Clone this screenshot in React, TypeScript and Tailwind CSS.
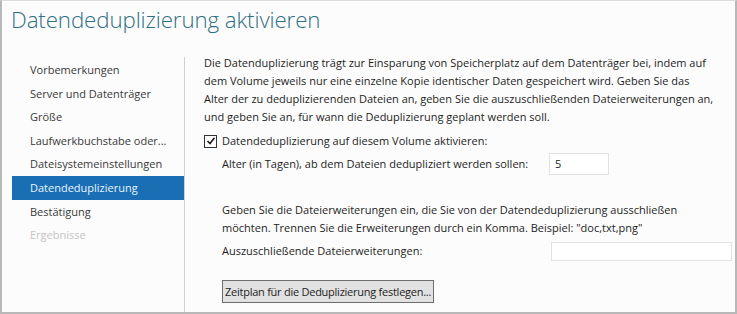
import React from "react";

const font = { fontFamily: '"Open Sans", "Noto Sans", sans-serif' };

export default function App() {
  const items = [
    "Vorbemerkungen",
    "Server und Datenträger",
    "Größe",
    "Laufwerkbuchstabe oder...",
    "Dateisystemeinstellungen",
    "Datendeduplizierung",
    "Bestätigung",
    "Ergebnisse",
  ];
  return (
    <div
      className="w-[737px] h-[314px] bg-[#fcfcfc] border-t border-t-[#dcdcdc] border-l-2 border-r-2 border-b-2 border-l-[#b8b8b8] border-r-[#b8b8b8] border-b-[#b8b8b8] flex flex-col overflow-hidden text-[11px] text-[#1e1e1e]"
      style={font}
    >
      <div className="h-[52px] pl-[9px] pt-[2px] text-[22.3px] font-light text-[#2f6f84] leading-[34px] tracking-[-0.1px]">
        Datendeduplizierung aktivieren
      </div>
      <div className="flex flex-1">
        <div className="w-[183px] pl-[10px] pt-[1px] border-r border-r-[#d0d0d0] mt-[4px] flex flex-col">
          {items.map((t, i) => (
            <div
              key={t}
              className={
                "h-[23.6px] leading-[23.6px] pl-[18px] whitespace-nowrap " +
                (i === 5
                  ? "bg-[#1a6eb4] text-[#e8f4ff]"
                  : i === 7
                  ? "text-[#c4c4c4]"
                  : "text-[#3a3a3a]")
              }
            >
              {t}
            </div>
          ))}
        </div>
        <div className="flex-1 pl-[19px] pt-[1px] flex flex-col">
          <p className="leading-[18px] whitespace-nowrap">
            Die Datenduplizierung trägt zur Einsparung von Speicherplatz auf dem Datenträger bei, indem auf
            <br />
            dem Volume jeweils nur eine einzelne Kopie identischer Daten gespeichert wird. Geben Sie das
            <br />
            Alter der zu deduplizierenden Dateien an, geben Sie die auszuschließenden Dateierweiterungen an,
            <br />
            und geben Sie an, für wann die Deduplizierung geplant werden soll.
          </p>
          <div className="flex items-center mt-[6px] h-[18px]">
            <div className="w-[13px] h-[13px] border border-[#333] bg-white flex items-center justify-center">
              <svg width="10" height="10" viewBox="0 0 10 10">
                <path d="M1.5 5 L4 7.5 L8.5 1.8" fill="none" stroke="#1a1a1a" strokeWidth="1.6" />
              </svg>
            </div>
            <span className="ml-[5px]">Datendeduplizierung auf diesem Volume aktivieren:</span>
          </div>
          <div className="flex items-center mt-[3px] pl-[18px] h-[22px]">
            <span className="w-[327px]">Alter (in Tagen), ab dem Dateien dedupliziert werden sollen:</span>
            <div className="w-[60px] h-[22px] border border-[#e2e2e2] bg-white pl-[5px] leading-[20px]">5</div>
          </div>
          <div className="pl-[18px] mt-[26px] leading-[18px] whitespace-nowrap">
            Geben Sie die Dateierweiterungen ein, die Sie von der Datendeduplizierung ausschließen
            <br />
            möchten. Trennen Sie die Erweiterungen durch ein Komma. Beispiel: "doc,txt,png"
          </div>
          <div className="flex items-center pl-[18px] mt-[3px] h-[22px]">
            <span className="w-[329px]">Auszuschließende Dateierweiterungen:</span>
            <div className="w-[181px] h-[19px] border border-[#e2e2e2] bg-white" />
          </div>
          <div className="pl-[18px] mt-[18px]">
            <div className="inline-block h-[23px] px-[2px] leading-[21px] bg-[#e1e1e1] border border-[#6e6e6e] tracking-[-0.25px]">
              Zeitplan für die Deduplizierung festlegen...
            </div>
          </div>
        </div>
      </div>
    </div>
  );
}
